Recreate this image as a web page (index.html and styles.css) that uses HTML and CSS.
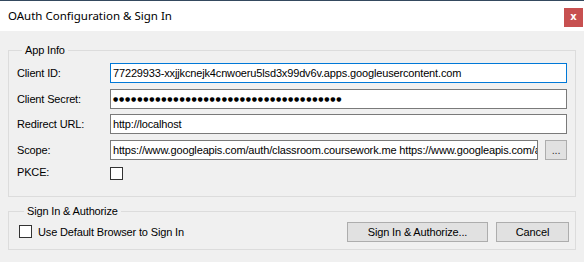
FILE: index.html
```html
<!DOCTYPE html>
<html>
<head>
<meta charset="utf-8">
<link rel="stylesheet" href="styles.css">
</head>
<body>
<div class="window">
  <div class="titlebar">
    <span class="title">OAuth Configuration &amp; Sign In</span>
    <span class="close">x</span>
  </div>
  <div class="content">
    <fieldset class="group group-app">
      <legend>App Info</legend>
      <div class="form">
        <label class="lbl">Client ID:</label>
        <div class="field focused">77229933-xxjjkcnejk4cnwoeru5lsd3x99dv6v.apps.googleusercontent.com</div>
        <label class="lbl">Client Secret:</label>
        <div class="field dots">●●●●●●●●●●●●●●●●●●●●●●●●●●●●●●●●●●●●●●</div>
        <label class="lbl">Redirect URL:</label>
        <div class="field">http://localhost</div>
        <label class="lbl">Scope:</label>
        <div class="scope-row">
          <div class="field scope">https://www.googleapis.com/auth/classroom.coursework.me https://www.googleapis.com/auth/classroom.rosters</div>
          <div class="btn small">...</div>
        </div>
        <label class="lbl">PKCE:</label>
        <div class="check-cell"><span class="checkbox"></span></div>
      </div>
    </fieldset>
    <fieldset class="group group-sign">
      <legend>Sign In &amp; Authorize</legend>
      <div class="sign-row">
        <div class="browser-opt"><span class="checkbox"></span><span>Use Default Browser to Sign In</span></div>
        <div class="buttons">
          <div class="btn sign">Sign In &amp; Authorize...</div>
          <div class="btn cancel">Cancel</div>
        </div>
      </div>
    </fieldset>
  </div>
</div>
</body>
</html>
```

FILE: styles.css
```css
html, body {
  margin: 0;
  padding: 0;
  background: #f0f0f0;
}
.window {
  width: 584px;
  height: 262px;
  background: #f0f0f0;
  font-family: "Liberation Sans", Arial, sans-serif;
  font-size: 11px;
  letter-spacing: -0.15px;
  color: #000;
  overflow: hidden;
}
.titlebar {
  height: 30px;
  border-top: 1px solid #34495e;
  background: #fff;
  display: flex;
  align-items: flex-start;
  justify-content: space-between;
}
.title {
  font-family: "Noto Sans", "Open Sans", sans-serif;
  font-size: 11.5px;
  letter-spacing: 0;
  line-height: 16px;
  margin: 7px 0 0 8px;
}
.close {
  width: 19px;
  height: 19px;
  margin: 7px 1px 0 0;
  background: #c75050;
  color: #fff;
  font-family: "DejaVu Sans", sans-serif;
  font-weight: bold;
  font-size: 10px;
  letter-spacing: 0;
  line-height: 18px;
  text-align: center;
}
.content {
  padding: 13px 8px 0 8px;
}
.group {
  margin: 0;
  padding: 0;
  border: 1px solid #dcdcdc;
  min-width: 0;
}
.group legend {
  margin-left: 5px;
  padding: 0 3px;
  line-height: 13px;
  font-size: 11px;
}
.group-app {
  padding: 6px 8px 17px 8px;
}
.form {
  display: grid;
  grid-template-columns: 93px minmax(0, 1fr);
  grid-template-rows: 20px 20px 20px 20px 13px;
  row-gap: 5.7px;
  align-items: center;
}
.form .check-cell {
  margin-top: 1.5px;
}
.lbl {
  white-space: nowrap;
}
.field {
  height: 20px;
  min-width: 0;
  box-sizing: border-box;
  border: 1px solid #7a7a7a;
  background: #fff;
  padding: 0 2px;
  line-height: 18px;
  white-space: nowrap;
  overflow: hidden;
}
.field.focused {
  border-color: #0078d7;
}
.dots {
  font-family: "DejaVu Sans", sans-serif;
  font-size: 6px;
  letter-spacing: 0.8px;
  line-height: 18px;
}
.scope-row {
  display: flex;
  gap: 7px;
  min-width: 0;
}
.scope-row .scope {
  flex: 1;
  min-width: 0;
}
.btn {
  box-sizing: border-box;
  height: 20px;
  background: #e1e1e1;
  border: 1px solid #adadad;
  text-align: center;
  line-height: 18px;
  white-space: nowrap;
}
.btn.small {
  width: 22px;
  flex: none;
  color: #333;
}
.check-cell {
  display: flex;
}
.checkbox {
  display: inline-block;
  flex: none;
  width: 13px;
  height: 13px;
  box-sizing: border-box;
  border: 1px solid #333;
  background: #fff;
}
.group-sign {
  margin-top: 8px;
  padding: 4px 6px 7px 10px;
}
.sign-row {
  display: flex;
  align-items: center;
  justify-content: space-between;
}
.browser-opt {
  display: flex;
  align-items: center;
  gap: 6px;
}
.buttons {
  display: flex;
  gap: 8px;
}
.btn.sign {
  width: 141px;
}
.btn.cancel {
  width: 73px;
}
```
